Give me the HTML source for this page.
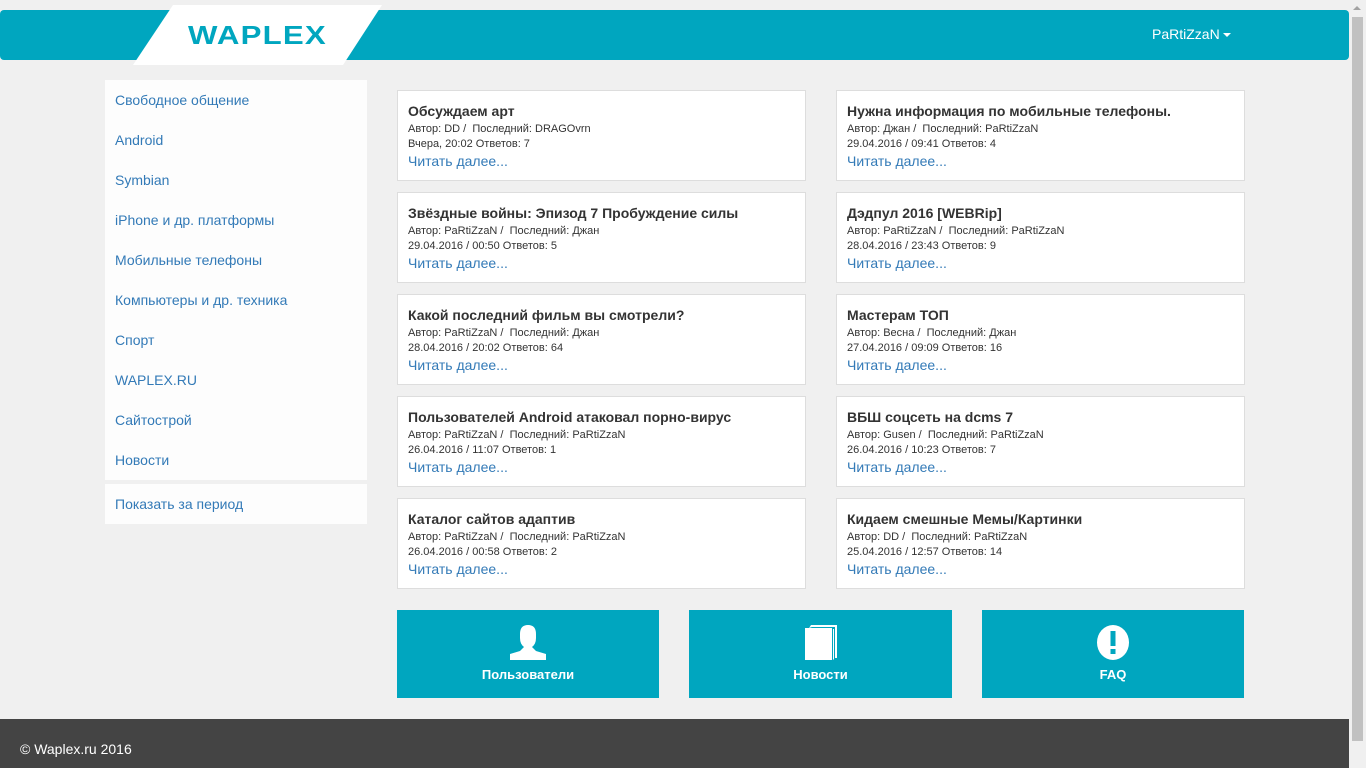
<!DOCTYPE html>
<html><head><meta charset="utf-8"><style>
*{margin:0;padding:0;box-sizing:border-box}
body{width:1366px;height:768px;background:#f0f0f0;font-family:"Liberation Sans",Arial,sans-serif;position:relative;overflow:hidden}
.hdr{position:absolute;left:0;top:10px;width:1349px;height:50px;background:#00a6bf;border-radius:4px}
.logo{position:absolute;top:5px;left:133px;width:250px;height:60px}
.logotxt{position:absolute;top:20px;left:188px;font-size:26px;font-weight:bold;color:#00a6bf;letter-spacing:1px;transform:scaleX(1.2);transform-origin:0 0}
.user{position:absolute;top:26px;left:1152px;color:#fff;font-size:14px}
.user:after{content:"";display:inline-block;margin-left:3px;vertical-align:middle;border-left:4px solid transparent;border-right:4px solid transparent;border-top:4px solid #fff}
.sb{position:absolute;right:0;top:0;width:17px;height:768px;background:#f0f0f0}
.sb div{position:absolute;left:3px;top:17px;width:11px;height:724px;background:#c1c1c1}
.sb:before{content:"";position:absolute;left:4px;top:6px;border-left:4px solid transparent;border-right:4px solid transparent;border-bottom:4px solid #a3a3a3}
.side{position:absolute;left:105px;top:80px;width:262px;background:#fdfdfd}
.side a{display:block;height:40px;line-height:40px;padding-left:10px;color:#337ab7;font-size:14px;text-decoration:none}
.card{position:absolute;width:409px;height:91px;background:#fff;border:1px solid #ddd;padding:12px 10px}
.card h3{font-size:14px;font-weight:bold;color:#333;margin-bottom:3px}
.card p{font-size:11px;color:#333;line-height:15px}
.card a{font-size:14px;color:#337ab7;display:block;margin-top:1px}
.btn{position:absolute;top:610px;height:88px;background:#00a6bf;color:#fff;font-size:13px;font-weight:bold;text-align:center}
.btn svg{position:absolute;left:50%;top:15px;margin-left:-19px}
.btn span{position:absolute;left:0;right:0;top:57px}
.foot{position:absolute;left:0;top:719px;width:1349px;height:49px;background:#444;color:#fff;font-size:14px;padding:22px 0 0 20px}
</style></head><body>
<div class="hdr"></div>
<svg class="logo" viewBox="0 0 250 60"><polygon points="40,0 249,0 210,60 0,60" fill="#fff"/></svg>
<div class="logotxt">WAPLEX</div>
<div class="user">PaRtiZzaN</div>
<div class="sb"><div></div></div>
<div class="side">
<a>Свободное общение</a><a>Android</a><a>Symbian</a><a>iPhone и др. платформы</a><a>Мобильные телефоны</a><a>Компьютеры и др. техника</a><a>Спорт</a><a>WAPLEX.RU</a><a>Сайтострой</a><a>Новости</a>
</div>
<div class="side" style="top:484px"><a>Показать за период</a></div>

<div class="card" style="left:397px;top:90px"><h3>Обсуждаем арт</h3><p>Автор: DD /&nbsp; Последний: DRAGOvrn<br>Вчера, 20:02 Ответов: 7</p><a>Читать далее...</a></div>
<div class="card" style="left:836px;top:90px"><h3>Нужна информация по мобильные телефоны.</h3><p>Автор: Джан /&nbsp; Последний: PaRtiZzaN<br>29.04.2016 / 09:41 Ответов: 4</p><a>Читать далее...</a></div>
<div class="card" style="left:397px;top:192px"><h3>Звёздные войны: Эпизод 7 Пробуждение силы</h3><p>Автор: PaRtiZzaN /&nbsp; Последний: Джан<br>29.04.2016 / 00:50 Ответов: 5</p><a>Читать далее...</a></div>
<div class="card" style="left:836px;top:192px"><h3>Дэдпул 2016 [WEBRip]</h3><p>Автор: PaRtiZzaN /&nbsp; Последний: PaRtiZzaN<br>28.04.2016 / 23:43 Ответов: 9</p><a>Читать далее...</a></div>
<div class="card" style="left:397px;top:294px"><h3>Какой последний фильм вы смотрели?</h3><p>Автор: PaRtiZzaN /&nbsp; Последний: Джан<br>28.04.2016 / 20:02 Ответов: 64</p><a>Читать далее...</a></div>
<div class="card" style="left:836px;top:294px"><h3>Мастерам ТОП</h3><p>Автор: Весна /&nbsp; Последний: Джан<br>27.04.2016 / 09:09 Ответов: 16</p><a>Читать далее...</a></div>
<div class="card" style="left:397px;top:396px"><h3>Пользователей Android атаковал порно-вирус</h3><p>Автор: PaRtiZzaN /&nbsp; Последний: PaRtiZzaN<br>26.04.2016 / 11:07 Ответов: 1</p><a>Читать далее...</a></div>
<div class="card" style="left:836px;top:396px"><h3>ВБШ соцсеть на dcms 7</h3><p>Автор: Gusen /&nbsp; Последний: PaRtiZzaN<br>26.04.2016 / 10:23 Ответов: 7</p><a>Читать далее...</a></div>
<div class="card" style="left:397px;top:498px"><h3>Каталог сайтов адаптив</h3><p>Автор: PaRtiZzaN /&nbsp; Последний: PaRtiZzaN<br>26.04.2016 / 00:58 Ответов: 2</p><a>Читать далее...</a></div>
<div class="card" style="left:836px;top:498px"><h3>Кидаем смешные Мемы/Картинки</h3><p>Автор: DD /&nbsp; Последний: PaRtiZzaN<br>25.04.2016 / 12:57 Ответов: 14</p><a>Читать далее...</a></div>

<div class="btn" style="left:397px;width:262px"><svg width="38" height="36" viewBox="0 0 38 36"><path d="M11 9 Q11 0 19 0 Q27 0 27 9 L27 13 Q27 19 23 22 L27 26 L37 29 L37 35 L1 35 L1 29 L11 26 L15 22 Q11 19 11 13 Z" fill="#fff"/></svg><span>Пользователи</span></div>
<div class="btn" style="left:689px;width:263px"><svg width="38" height="36" viewBox="0 0 38 36"><path d="M7 3 L9 0 L35 0 L35 33 L33 33 L33 2 L10 2 Z" fill="#fff"/><path d="M3 3 L30 3 L30 35 L3 35 Z" fill="#fff"/><path d="M31 4 L32 4 L32 34 L31 35Z" fill="#fff"/></svg><span>Новости</span></div>
<div class="btn" style="left:982px;width:262px"><svg width="38" height="36" viewBox="0 0 38 36"><ellipse cx="19" cy="17.5" rx="16" ry="17.5" fill="#fff"/><rect x="16.5" y="6" width="5" height="15" fill="#00a6bf"/><rect x="16.5" y="24" width="5" height="5" fill="#00a6bf"/></svg><span>FAQ</span></div>

<div class="foot">© Waplex.ru 2016</div>
</body></html>
